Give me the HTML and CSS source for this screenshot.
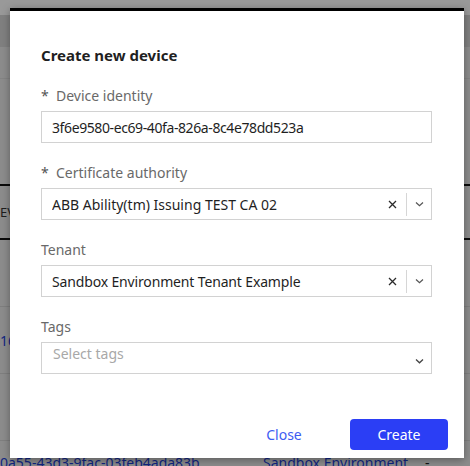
FILE: index.html
```html
<!DOCTYPE html>
<html lang="en">
<head>
<meta charset="utf-8">
<title>Create new device</title>
<link rel="stylesheet" href="styles.css">
</head>
<body>
<div class="page">
  <div class="page-top"></div>
  <div class="page-band"></div>
  <div class="page-sub"></div>
  <div class="page-gap"></div>
  <div class="thead"><span class="th-text">EV</span></div>
  <div class="trow trow-1"></div>
  <div class="trow"><span class="link">16</span></div>
  <div class="trow"></div>
  <div class="trow trow-last">
    <span class="link id">0a55-43d3-9fac-03feb4ada83b</span>
    <span class="link env">Sandbox Environment</span>
    <span class="dash">-</span>
  </div>
</div>
<div class="overlay"></div>
<div class="modal">
  <h1 class="modal-title">Create new device</h1>
  <div class="field">
    <label class="label"><span class="req">*</span>Device identity</label>
    <div class="input"><span class="hex">3f6e9580-ec69-40fa-826a-8c4e78dd523a</span></div>
  </div>
  <div class="field">
    <label class="label"><span class="req">*</span>Certificate authority</label>
    <div class="select">
      <span class="value">ABB Ability(tm) Issuing TEST CA 02</span>
      <span class="clear"><svg width="9" height="9" viewBox="0 0 9 9"><path d="M1 1L8 8M8 1L1 8" stroke="#2b2b2b" stroke-width="1.3" fill="none"/></svg></span>
      <span class="divider"></span>
      <span class="chev"><svg width="9" height="6" viewBox="0 0 9 6"><path d="M1 1.5L4.5 4.8L8 1.5" stroke="#555" stroke-width="1.2" fill="none"/></svg></span>
    </div>
  </div>
  <div class="field">
    <label class="label">Tenant</label>
    <div class="select">
      <span class="value narrow">Sandbox Environment Tenant Example</span>
      <span class="clear"><svg width="9" height="9" viewBox="0 0 9 9"><path d="M1 1L8 8M8 1L1 8" stroke="#2b2b2b" stroke-width="1.3" fill="none"/></svg></span>
      <span class="divider"></span>
      <span class="chev"><svg width="9" height="6" viewBox="0 0 9 6"><path d="M1 1.5L4.5 4.8L8 1.5" stroke="#555" stroke-width="1.2" fill="none"/></svg></span>
    </div>
  </div>
  <div class="field">
    <label class="label">Tags</label>
    <div class="select tags">
      <span class="placeholder">Select tags</span>
      <span class="chev chev-tags"><svg width="9" height="6" viewBox="0 0 9 6"><path d="M1 1.5L4.5 4.8L8 1.5" stroke="#444" stroke-width="1.3" fill="none"/></svg></span>
    </div>
  </div>
  <div class="footer">
    <button class="btn btn-link">Close</button>
    <button class="btn btn-primary">Create</button>
  </div>
</div>
</body>
</html>
```

FILE: styles.css
```css
* { box-sizing: border-box; }
html, body { margin: 0; padding: 0; }
body {
  width: 470px;
  height: 466px;
  overflow: hidden;
  position: relative;
  font-family: "Noto Sans", "Open Sans", sans-serif;
  background: #eaeaea;
}
.page { width: 470px; height: 466px; overflow: hidden; }
.page-top { height: 15px; background: #ffffff; }
.page-band { height: 32px; background: #d6d6d6; }
.page-sub { height: 32px; border-bottom: 1px solid #dcdcdc; }
.page-gap { height: 105px; }
.thead {
  height: 56px;
  border-top: 2px solid #111;
  border-bottom: 2px solid #111;
  display: flex;
  align-items: center;
  font-size: 13px;
  color: #333;
}
.trow {
  height: 67px;
  border-bottom: 1px solid #d4d4d4;
  display: flex;
  align-items: center;
  font-size: 14px;
}
.trow-last { align-items: flex-start; height: 40px; border-bottom: none; padding-top: 12px; }
.link { color: #1c3fd8; }
.id { width: 263px; }
.env { width: 162px; }
.dash { color: #222; }
.overlay {
  position: absolute;
  inset: 0;
  background: rgba(0, 0, 0, 0.4);
}
.modal {
  position: absolute;
  left: 10px;
  top: 8px;
  width: 454px;
  height: 450px;
  background: #fff;
  border-top: 3px solid #000;
  box-shadow: 0 2px 8px rgba(0, 0, 0, 0.35);
  padding: 32px 32px 0 31px;
  display: flex;
  flex-direction: column;
}
.modal-title {
  margin: 0 0 19px;
  font-size: 15px;
  line-height: 24px;
  font-weight: 700;
  color: #1f1f1f;
}
.field { display: flex; flex-direction: column; margin-bottom: 20px; }
.label {
  font-size: 14px;
  line-height: 20px;
  color: #696969;
  margin-bottom: 5px;
}
.req { display: inline-block; width: 15px; color: #555; }
.input, .select {
  height: 32px;
  border: 1px solid #d2d2d2;
  font-size: 14px;
  color: #1f1f1f;
  display: flex;
  align-items: center;
  padding-left: 10px;
}
.hex { letter-spacing: -0.4px; }
.value { flex: 1; white-space: nowrap; overflow: hidden; }
.narrow { letter-spacing: -0.15px; }
.clear { width: 9px; display: flex; margin-right: 9px; }
.divider { width: 1px; height: 23px; background: #d6d6d6; }
.chev { width: 24px; display: flex; justify-content: center; }
.tags { align-items: flex-start; padding-left: 11px; }
.placeholder { flex: 1; color: #a8a8a8; line-height: 22px; }
.chev-tags { align-self: center; margin-top: 5px; }
.footer {
  margin-top: auto;
  margin-right: -16px;
  margin-bottom: 8px;
  display: flex;
  justify-content: flex-end;
  align-items: center;
  gap: 26px;
}
.btn {
  font-family: inherit;
  font-size: 14px;
  height: 31px;
  border-radius: 4px;
  border: none;
  cursor: pointer;
}
.btn-link {
  background: transparent;
  color: #3d5cf2;
  width: 80px;
  padding: 0;
}
.btn-primary {
  background: #2b3ef5;
  color: #fff;
  width: 98px;
}
```
